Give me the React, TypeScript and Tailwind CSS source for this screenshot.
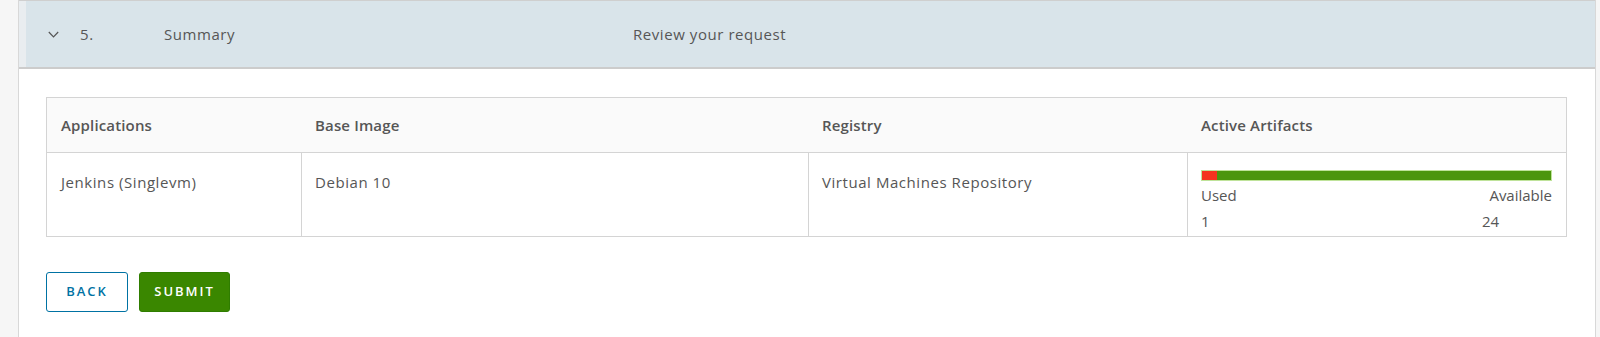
import React from 'react';

const font = { fontFamily: '"Open Sans", "Liberation Sans", sans-serif' };

function UsageBar({ used, total }: { used: number; total: number }) {
  const pct = (used / total) * 100;
  return (
    <div className="flex flex-col">
      <div className="flex h-[11px] w-full border border-[#bfe39a]">
        <div className="h-full bg-[#f5341f]" style={{ width: `${pct}%` }} />
        <div className="h-full flex-1 bg-[#4c960e]" />
      </div>
      <div className="mt-[4px] flex justify-between leading-5">
        <span>Used</span>
        <span>Available</span>
      </div>
      <div className="mt-[6px] flex justify-between leading-5">
        <span>{used}</span>
        <span className="w-[70px]">{total}</span>
      </div>
    </div>
  );
}

export default function App() {
  return (
    <div className="min-h-screen bg-[#f6f6f6] text-[#565656] tracking-[0.035em]" style={font}>
      <div className="ml-[18px] mr-[4px] min-h-[337px] border-x border-[#d8d8d8] bg-white">
        <div className="flex h-[69px] border-t border-b-2 border-t-[#cfcfcf] border-b-[#cccccc] bg-[#d9e4ea]">
          <div className="w-[7px] bg-[#e9edf0]" />
          <div className="flex items-center text-[15px]">
            <svg className="ml-[22px] h-[7px] w-[11px]" viewBox="0 0 11 7" fill="none">
              <path d="M0.8 1 L5.5 5.8 L10.2 1" stroke="#555" strokeWidth="1.2" />
            </svg>
            <span className="ml-[21px] w-[84px]">5.</span>
            <span className="w-[469px]">Summary</span>
            <span>Review your request</span>
          </div>
        </div>

        <div className="pl-[27px] pr-[28px] pt-[28px] text-[15px]">
          <div className="border border-[#d4d4d4]">
            <div className="grid h-[55px] grid-cols-[254px_507px_379px_379px] items-center border-b border-[#d4d4d4] bg-[#fafafa] font-semibold tracking-[0.01em]">
              <div className="pl-[14px]">Applications</div>
              <div className="pl-[14px]">Base Image</div>
              <div className="pl-[14px]">Registry</div>
              <div className="pl-[14px]">Active Artifacts</div>
            </div>
            <div className="grid h-[83px] grid-cols-[254px_507px_379px_379px]">
              <div className="pl-[14px] pt-[19px] leading-5">Jenkins (Singlevm)</div>
              <div className="border-l border-[#d4d4d4] pl-[13px] pt-[19px] leading-5">Debian 10</div>
              <div className="border-l border-[#d4d4d4] pl-[13px] pt-[19px] leading-5">Virtual Machines Repository</div>
              <div className="border-l border-[#d4d4d4] pl-[13px] pr-[14px] pt-[17px] tracking-normal">
                <UsageBar used={1} total={24} />
              </div>
            </div>
          </div>

          <div className="mt-[35px] flex gap-[11px]">
            <button className="h-[40px] w-[82px] rounded-[3px] border border-[#0072a3] bg-white text-[13px] font-semibold tracking-[0.15em] text-[#0072a3]">
              BACK
            </button>
            <button className="h-[40px] w-[91px] rounded-[3px] border border-[#2f7d00] bg-[#3a8700] text-[13px] font-semibold tracking-[0.15em] text-white">
              SUBMIT
            </button>
          </div>
        </div>
      </div>
    </div>
  );
}
